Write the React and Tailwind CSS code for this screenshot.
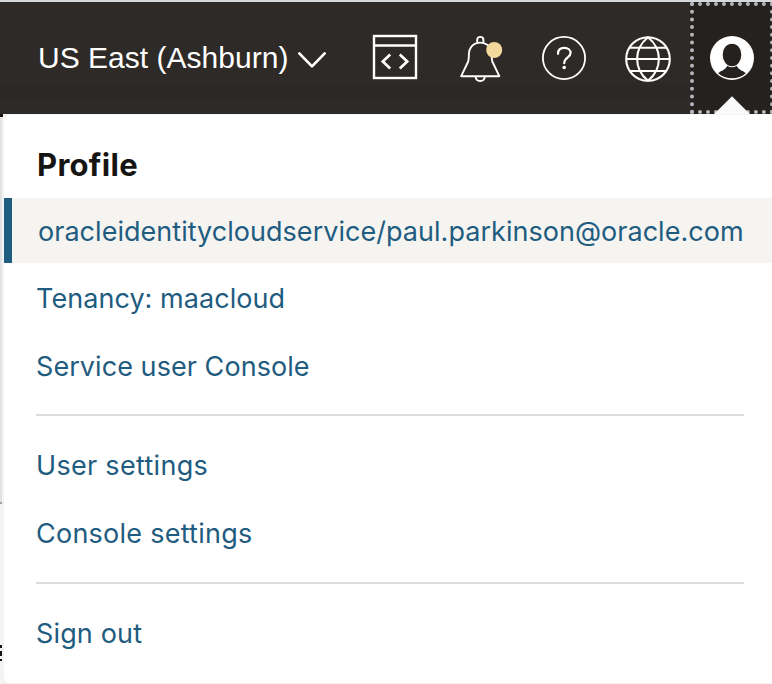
const LINK = 'font-["Inter",sans-serif] text-[27px] leading-[34px] text-[#1f5c80] whitespace-nowrap';

function MenuItem({ children, tracking }) {
  return (
    <a className={`flex h-[68px] items-center pl-8 ${LINK}`}>
      <span className={tracking}>{children}</span>
    </a>
  );
}

function Divider() {
  return <div className="ml-8 h-[2px] w-[708px] bg-[#dedbd8]" />;
}

function ChevronIcon() {
  return (
    <svg width="30" height="20" viewBox="0 0 30 20" fill="none" stroke="#fff" strokeWidth="2.7" strokeLinecap="round" strokeLinejoin="round">
      <path d="M2.3 6 L15 19 L27.7 6" transform="translate(0 -1.6)" />
    </svg>
  );
}

function DevToolsIcon() {
  return (
    <svg width="46" height="46" viewBox="0 0 46 46" fill="none" stroke="#fff" strokeWidth="2.4">
      <rect x="2" y="2" width="42" height="42" />
      <path d="M2 11.5H44" />
      <path d="M18.2 20.6 L10.8 27.5 L18.2 34.4 M27.8 20.6 L35.2 27.5 L27.8 34.4" strokeWidth="2.7" />
    </svg>
  );
}

function BellIcon() {
  return (
    <svg width="44" height="48" viewBox="0 0 44 48" fill="none" stroke="#fff" strokeWidth="1.9" strokeLinejoin="round">
      <path d="M17.2 7.2 V5 a3.1 3.1 0 0 1 6.2 0 V7.2" />
      <path d="M1.2 41.2 L8.2 26.5 C9.4 22.5 8.2 18.5 9.6 14.8 C11.5 10 15.2 7.6 20.2 7.6 C25.2 7.6 29 10 30.9 14.8 C32.3 18.5 31.1 22.5 32.3 26.5 L39.3 41.2 Z" />
      <path d="M15.6 41.5 C15.8 44.6 17.5 46 20.2 46 C22.9 46 24.6 44.6 24.8 41.5" />
      <circle cx="34.2" cy="15" r="8" fill="#f4d99c" stroke="none" />
    </svg>
  );
}

function HelpIcon() {
  return (
    <svg width="46" height="46" viewBox="0 0 46 46" fill="none" stroke="#fff" strokeLinecap="round">
      <circle cx="23" cy="23" r="21.1" strokeWidth="1.8" />
      <path d="M17 18.8 C17 15 19.5 12.9 23.2 12.9 C27 12.9 29.6 15 29.6 18.1 C29.6 22.4 23.2 22.6 23.2 28.2" strokeWidth="2.2" />
      <circle cx="23.2" cy="32.5" r="1.8" fill="#fff" stroke="none" />
    </svg>
  );
}

function GlobeIcon() {
  return (
    <svg width="48" height="48" viewBox="0 0 48 48" fill="none" stroke="#fff" strokeWidth="2.1">
      <circle cx="24" cy="24" r="21.8" />
      <path d="M24 2.2 C9.5 14 9.5 34 24 45.8 C38.5 34 38.5 14 24 2.2Z M2.2 24H45.8 M6 12.7H42 M6 36H42" />
    </svg>
  );
}

function AvatarIcon() {
  return (
    <svg width="46" height="46" viewBox="0 0 46 46">
      <circle cx="23" cy="23" r="22" fill="#fff" />
      <path d="M9.2 38.2 C12.5 35.2 16.8 35 18.3 30.5 H27.7 C29.2 35 33.5 35.2 36.8 38.2 C29.5 45 16.5 45 9.2 38.2Z" fill="#25211e" />
      <path d="M23 8.2 C28.6 8.2 32.9 13.2 32.9 19.7 C32.9 26.5 28.5 31.7 23 31.7 C17.5 31.7 13.1 26.5 13.1 19.7 C13.1 13.2 17.4 8.2 23 8.2Z" fill="#25211e" stroke="#fff" strokeWidth="1.1" />
    </svg>
  );
}

export default function App() {
  return (
    <div className="flex h-[684px] w-[772px] flex-col overflow-hidden bg-[#f3f2f1]">
      <header className="flex h-[114px] shrink-0 border-t-2 border-[#d5d8da] bg-[#2e2a27]">
        <div className="flex w-[690px] shrink-0 bg-[linear-gradient(to_bottom,transparent_82px,#2b2927_83px,#2b2927_98px,transparent_99px)]">
          <div className="ml-[38px] mt-[39px] h-[34px] w-[250px] whitespace-nowrap font-['Liberation_Sans',sans-serif] text-[30px] leading-[34px] text-white">
            <span className="tracking-[0.02px]">US East (Ashburn)</span>
          </div>
          <div className="ml-[9px] mt-[47px]"><ChevronIcon /></div>
          <div className="ml-[45px] mt-[32px]"><DevToolsIcon /></div>
          <div className="ml-[42px] mt-[33px]"><BellIcon /></div>
          <div className="ml-[37px] mt-[33px]"><HelpIcon /></div>
          <div className="ml-[37px] mt-[33px]"><GlobeIcon /></div>
        </div>
        <button className="relative h-[112px] w-[84px] shrink-0 border-4 border-dotted border-[#b3b6bc] bg-[#25211e]">
          <div className="ml-[15px]"><AvatarIcon /></div>
          <svg className="absolute left-[19px] top-[90px]" width="38" height="18" viewBox="0 0 38 18">
            <path d="M19 0.3 L36.8 18 H1.2Z" fill="#fafafa" />
          </svg>
        </button>
      </header>

      <div className="flex h-[570px] bg-[#f4f3f3]">
        <aside className="w-1 shrink-0 overflow-hidden">
          <div className="h-[3px] w-[3px] bg-[#171412]" />
          <div className="h-[385px] w-[2px] bg-[#e3e2e2]" />
          <div className="h-[2px] w-[2px] bg-[#a4a2a0]" />
          <div className="mt-[141px] flex h-4 w-[2px] flex-col justify-between">
            <i className="block h-[3px] bg-[#161513]" />
            <i className="block h-[5px] bg-[#161513]" />
            <i className="block h-[2px] bg-[#161513]" />
          </div>
        </aside>
        <nav className="h-[569px] w-[768px] shrink-0 rounded-l-[6px] border-t border-[#f8f7f5] bg-white">
          <h2 className="flex h-[83px] items-center pl-[33px] pt-4 font-['Inter',sans-serif] text-[31px] font-bold leading-[38px] text-[#161513]">
            <span className="tracking-[0.3px]">Profile</span>
          </h2>
          <a className={`flex h-[65px] items-center border-l-8 border-[#1f5c80] bg-[#f5f4f1] pl-[26px] pt-[2px] ${LINK}`}>
            <span className="tracking-[0.03px]">oracleidentitycloudservice/paul.parkinson@oracle.com</span>
          </a>
          <div className="h-[151px] pt-[2px]">
            <MenuItem tracking="tracking-[0.06px]">Tenancy: maacloud</MenuItem>
            <MenuItem tracking="tracking-[0.06px]">Service user Console</MenuItem>
          </div>
          <Divider />
          <div className="h-[166px] pt-4">
            <MenuItem tracking="tracking-[0.3px]">User settings</MenuItem>
            <MenuItem tracking="tracking-[0.25px]">Console settings</MenuItem>
          </div>
          <Divider />
          <div className="pt-4">
            <MenuItem tracking="tracking-[0.15px]">Sign out</MenuItem>
          </div>
        </nav>
      </div>
    </div>
  );
}
